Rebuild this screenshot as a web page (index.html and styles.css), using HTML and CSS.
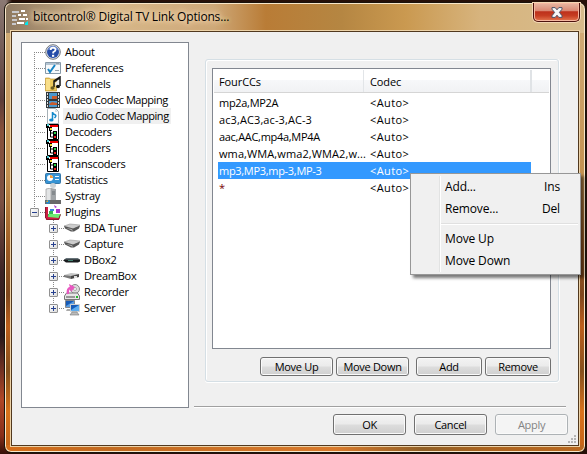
FILE: index.html
```html
<!DOCTYPE html>
<html lang="en">
<head>
<meta charset="utf-8">
<title>bitcontrol® Digital TV Link Options...</title>
<link rel="stylesheet" href="styles.css">
</head>
<body>
<svg class="defs" width="0" height="0" aria-hidden="true">
  <symbol id="codec" viewBox="0 0 16 16"><path fill="#fff" stroke="#000" d="M2.500.5h11v15h-11z"/><path fill="#f00000" d="M5 1h8v2H5z"/><path d="M5.500 5v8H9M5.500 9H9" fill="none" stroke="#000"/><path fill="#000" d="M1 0h3v4H1zM4 3h3v4H4zM8 7h4v4H8zM8 11h4v4H8z"/><path fill="#4ccbd2" d="M2 0h2v2H2z"/><path fill="#f1df32" d="M5 4h2v2H5z"/><path fill="#28d344" d="M9 8h2v2H9z"/><path fill="#f02020" d="M9 12h2v2H9z"/></symbol>
  <symbol id="tuner" viewBox="0 0 16 16"><path fill="#ccc" stroke="#999" stroke-width=".6" d="M0 6l6-2 10 1-1 2-6 2z"/><path fill="#555" d="M0 6l9 2.500 7-3-1 3-5 3-3 0-6-3z"/><path fill="#aaa" d="M2 8l6 1 1 2z"/></symbol>
</svg>
<main class="window">
  <header class="titlebar">
    <svg class="app-icon" width="16" height="16" viewBox="0 0 16 16"><path fill="#c8c8cc" d="M0 1h7v2H0zM0 5h4v2H0zM0 9h5v2H0zM0 13h4v2H0z"/><path fill="#fff" d="M9 0h4v2H9zM6 4h3v2H6zM11 4h4v2h-4zM7 8h6v2H7zM14 8h2v2h-2zM5 12h7v2H5z"/><path fill="#00e6ee" d="M13 15v-2l3-2v4z"/></svg>
    <h1>bitcontrol® Digital TV Link Options...</h1>
    <button class="close" aria-label="Close"><svg width="12" height="11" viewBox="0 0 12 11"><path fill="#f7f7f7" stroke="#4d5266" d="M1 .6h3.200L6 2.800 7.800.6H11v1.600L8.400 5.400 11 8.700v1.700H7.800L6 8.200l-1.800 2.200H1V8.700l2.600-3.300L1 2.200z"/></svg></button>
  </header>
  <div class="client">
    <nav class="tree">
      <ul>
        <li><svg class="icon" viewBox="0 0 16 16"><circle cx="8" cy="8" r="7.300" fill="#e0e3e7" stroke="#717780"/><circle cx="8" cy="8" r="6" fill="#234ba8"/><path fill="#718fd2" d="M3 6a5 4 0 0 1 10 0q-5-2-10 0"/><path d="M5.700 6q0-2.300 2.500-2.300T10.500 6Q10.500 7 8.200 8.200v1.300" fill="none" stroke="#fff" stroke-width="1.800"/><path fill="#fff" d="M7 10.800h2.200v2H7z"/></svg><span>About</span></li>
        <li><svg class="icon" viewBox="0 0 16 16"><path fill="#f6f9fb" stroke="#8799a8" d="M.5 2.500h15v11H.5z"/><path fill="#b4c5d3" d="M1 3h14v2H1z"/><path fill="none" stroke="#1684c4" stroke-width="2" d="M3 9l2 3 5-7"/><path stroke="#92a0ac" d="M10 10.500h4M11 3.500h3"/></svg><span>Preferences</span></li>
        <li><svg class="icon" viewBox="0 0 16 16"><path fill="#edc95c" stroke="#b98a20" stroke-width=".6" d="M.5 2h4l1 1h6v12H.5z"/><path fill="#f9df8a" d="M1 3h4v11H1z"/><path fill="none" stroke="#171717" stroke-width="1.500" d="M9 11V5l6-4v9M9 6l6-4"/><path fill="#eee" d="M10 7l4-3v3l-3 4z"/><ellipse cx="7.500" cy="12" rx="2" ry="1.800" fill="#6c5e23"/><ellipse cx="13" cy="10.500" rx="2" ry="1.800" fill="#111"/></svg><span>Channels</span></li>
        <li class="wide"><svg class="icon" viewBox="0 0 16 16"><path fill="#30383d" d="M1 0h14v16H1z"/><path fill="#4a98cf" d="M4 1h8v6H4zM4 9h8v6H4z"/><path fill="#c95b2c" d="M7 4h5v3H7zM4 12l3-2 5 1v2H5z"/><path d="M2.500 1v15m11-15v15" stroke="#ddd" stroke-dasharray="2 1"/></svg><span>Video Codec Mapping</span></li>
        <li class="wide selected"><svg class="icon" viewBox="0 0 16 16"><path fill="#fff" stroke="#a6b1b7" d="M2.500.5h8l3 3v12h-11z"/><path fill="#d3dfe5" d="M10 1l3 3h-3z"/><path fill="none" stroke="#168acb" stroke-width="1.500" d="M7.500 12V4q0 2 3 3 1 1-1 3"/><ellipse cx="6.300" cy="12" rx="2.200" ry="1.600" fill="#168acb"/></svg><span>Audio Codec Mapping</span></li>
        <li><svg class="icon"><use href="#codec"/></svg><span>Decoders</span></li>
        <li><svg class="icon"><use href="#codec"/></svg><span>Encoders</span></li>
        <li><svg class="icon"><use href="#codec"/></svg><span>Transcoders</span></li>
        <li><svg class="icon" viewBox="0 0 16 16"><rect x=".5" y="1.500" width="15" height="10" rx="1" fill="#3593d4" stroke="#3577a8"/><circle cx="5" cy="6" r="3" fill="#fff"/><path fill="#f29c37" d="M5 6V3a3 3 0 0 1 3 3z"/><path stroke="#e7f6ff" d="M10 4.500h4m-4 3h4"/><ellipse cx="8" cy="13.500" rx="3" ry="2.500" fill="#cbd3d8"/></svg><span>Statistics</span></li>
        <li><svg class="icon" viewBox="0 0 16 16"><path fill="#e2e4e5" stroke="#999" stroke-width=".7" d="M1 1l5-1v14H1z"/><path fill="#a1a5a8" d="M6 0l5 1v13H6z"/><path stroke="#686f73" d="M7 4h3M7 6h3"/><path fill="#686868" d="M0 12h16v4H0z"/><circle cx="3" cy="14" r="2" fill="#268acd"/><path fill="#e9a925" d="M3 12v2H1z"/></svg><span>Systray</span></li>
        <li class="root"><i class="toggle minus"></i><svg class="icon" viewBox="0 0 16 16"><path fill="#cc1e42" d="M0 3h3v10h12l-1 3H1z"/><path fill="#36b557" d="M4 7h4v3H4zM3 10h12v3H3z"/><path fill="#3887dd" d="M5 5h4v2H5z"/><path fill="#a832cb" d="M11 5h4v4h-4zM9 1l3 2-2 1z"/><path fill="#6dec73" d="M3 13l1-3h12l-2 4z"/><path fill="none" stroke="#8c1730" d="M.5 3v11l2 1.500h11l2-5"/></svg><span>Plugins</span></li>
      </ul>
      <ul class="children">
        <li><i class="toggle plus"></i><svg class="icon"><use href="#tuner"/></svg><span>BDA Tuner</span></li>
        <li><i class="toggle plus"></i><svg class="icon"><use href="#tuner"/></svg><span>Capture</span></li>
        <li><i class="toggle plus"></i><svg class="icon" viewBox="0 0 16 16"><path fill="#68747a" d="M2 6h12l2 2H0z"/><path fill="#171b1d" d="M0 7.500h16v2l-2 1H2L0 9z"/><path stroke="#438070" d="M4 8.500h5"/></svg><span>DBox2</span></li>
        <li><i class="toggle plus"></i><svg class="icon" viewBox="0 0 16 16"><path fill="#c4c5c5" d="M0 7l7-2 9 1-9 3z"/><path fill="#777" d="M0 7l7 1v3L0 9z"/><path fill="#454545" d="M7 8l8-2v3l-8 2z"/><path fill="#ddd" d="M10 8h3v2h-3z"/></svg><span>DreamBox</span></li>
        <li><i class="toggle plus"></i><svg class="icon" viewBox="0 0 16 16"><circle cx="11" cy="5" r="4.500" fill="#ddd" stroke="#888"/><circle cx="11" cy="5" r="1.500" fill="#fff" stroke="#aaa"/><path fill="#e7e7e7" stroke="#777" d="M2.500 9h11l2 3v3.500H.5V12z"/><path fill="#999" d="M2 12h9v2H2z"/><path fill="#22b92b" d="M12 12h2v2h-2z"/><path d="M4 10Q3 4 7 4" fill="none" stroke="#e858c0" stroke-width="2.500"/><path fill="#e858c0" d="M5 0l6 3-4 5z"/></svg><span>Recorder</span></li>
        <li><i class="toggle plus"></i><svg class="icon" viewBox="0 0 16 16"><path fill="#5b9ee1" stroke="#85878c" d="M1.500.5h9v7h-9z"/><path fill="#165bb8" d="M2 1h8L2 6z"/><path fill="#aaa" d="M3 9h5v2H2z"/><path fill="#5eadf0" stroke="#d0d0d0" d="M6.500 4.500h9v7h-9z"/><path fill="#165bb8" d="M7 5h8l-8 5z"/><path fill="#bbb" stroke="#777" stroke-width=".6" d="M8 12h5l2 3H6z"/></svg><span>Server</span></li>
      </ul>
    </nav>
    <div class="page">
      <section class="group">
        <div class="list">
          <div class="list-head"><span>FourCCs</span><span>Codec</span></div>
          <div class="row tight"><span>mp2a,MP2A</span><span>&lt;Auto&gt;</span></div>
          <div class="row"><span>ac3,AC3,ac-3,AC-3</span><span>&lt;Auto&gt;</span></div>
          <div class="row tight"><span>aac,AAC,mp4a,MP4A</span><span>&lt;Auto&gt;</span></div>
          <div class="row"><span>wma,WMA,wma2,WMA2,w...</span><span>&lt;Auto&gt;</span></div>
          <div class="row tight active"><span>mp3,MP3,mp-3,MP-3</span><span>&lt;Auto&gt;</span></div>
          <div class="row star"><span>*</span><span>&lt;Auto&gt;</span></div>
        </div>
        <div class="list-actions"><button class="btn">Move Up</button><button class="btn">Move Down</button><button class="btn small gap">Add</button><button class="btn small">Remove</button></div>
      </section>
      <hr>
      <footer><button class="btn">OK</button><button class="btn">Cancel</button><button class="btn" disabled>Apply</button></footer>
    </div>
    <svg class="grip" width="8" height="8" viewBox="0 0 8 8"><path fill="#b5b5b5" d="M6 0h2v2H6zM3 3h2v2H3zM6 3h2v2H6zM0 6h2v2H0zM3 6h2v2H3zM6 6h2v2H6z"/></svg>
  </div>
</main>
<div class="menu">
  <div class="item"><span>Add...</span><span>Ins</span></div>
  <div class="item"><span>Remove...</span><span>Del</span></div>
  <div class="separator"></div>
  <div class="item"><span>Move Up</span></div>
  <div class="item"><span>Move Down</span></div>
</div>
</body>
</html>
```
FILE: styles.css
```css
* { box-sizing: border-box; }
body {
  margin: 0; width: 587px; height: 454px; padding: 2px 1px 1px 4px; overflow: hidden;
  font: 11px/16px "Open Sans", "Noto Sans", sans-serif; color: #000;
  background: linear-gradient(90deg, transparent 6px, #261008 12px), linear-gradient(#8b7974, #5c3d39 22%, #87503a 29%, #7d5143 44%, #3e2425 60%, #28191c 74%, #b04627 88%, #872e19 96%, #351008);
}
.defs { position: absolute; }
button { font: inherit; color: inherit; padding: 0; }
.window {
  width: 582px; height: 451px; padding: 0 6px 6px; border: 1px solid #19130d; border-radius: 7px;
  box-shadow: inset 0 0 0 1px #f8e7c9;
  background:
    linear-gradient(90deg, #8d7860 0, #d7b88c 18%, #cea878 36%, #b97c36 45%, #b58642 58%, #ca9950 69%, #d7b47e 82%, #d7bc8c) 0 0 / 100% 30px no-repeat,
    linear-gradient(90deg, #d56e1b, #c26a20 18%, #d97a2c 57%, #916027 72%, #ad641f 84%, #b96920) 0 100% / 100% 7px no-repeat,
    linear-gradient(#cfaa74 7%, #c49251 38%, #9c5a22 55%, #7e471d 65%, #bd5f1c 72%, #85511d 82%, #d9731c 91%, #c26419);
}
.titlebar { height: 28px; display: flex; align-items: flex-start; padding-left: 1px; }
.app-icon { margin-top: 7px; flex: none; }
h1 {
  margin: 4px 0 0 4px; padding: 0 1px; height: 20px; flex: none; white-space: nowrap;
  font: 400 12px/20px "Open Sans", "Noto Sans", sans-serif; letter-spacing: -.17px;
  text-shadow: 0 0 5px #ffe9cc, 0 0 8px #f2d2a8, 0 0 10px #f0cca0;
}
.close {
  margin: 0 -1px 0 auto; width: 47px; height: 19px; border: 1px solid #4c120d; border-top: 0; border-radius: 0 0 5px 5px;
  display: flex; align-items: center; justify-content: center;
  background: linear-gradient(#e8b8a4, #d98671 45%, #bd301b 48%, #c63d22 70%, #e47750);
  box-shadow: inset 0 0 0 1px #f5b7a0, 0 0 0 1px #f2d6b4;
}
.client {
  position: relative; width: 568px; height: 415px; border: 1px solid #51391f; outline: 1px solid #ecd2a8; background: #f0f0f0;
  display: flex; padding: 10px 10px 0 9px;
}
.tree { width: 168px; height: 366px; border: 1px solid #828790; background: #fff; padding: 1px 0; }
ul { list-style: none; margin: 0; padding: 0 0 0 12px; }
li { height: 16px; display: flex; align-items: center; position: relative; padding-left: 11px; }
li::before { content: ""; position: absolute; left: 0; top: 8px; width: 11px; height: 1px; background: repeating-linear-gradient(90deg, #888 0 1px, transparent 1px 2px); }
li::after { content: ""; position: absolute; left: 0; top: 0; width: 1px; height: 16px; background: repeating-linear-gradient(#888 0 1px, transparent 1px 2px); }
li:first-child::after { top: 8px; height: 8px; }
li:last-child::after { height: 8px; }
.children { padding-left: 31px; }
.children li:first-child::after { top: 0; height: 16px; }
.icon { width: 16px; height: 16px; flex: none; }
li span { margin-left: 2px; padding: 0 2px; line-height: 15px; height: 16px; white-space: nowrap; letter-spacing: -.25px; }
.wide span { letter-spacing: -.45px; }
.selected span { background: #f0f0f0; }
.toggle { position: absolute; z-index: 1; left: -4px; top: 4px; width: 9px; height: 9px; border: 1px solid #919191; border-radius: 1px; background: linear-gradient(#27418f, #27418f) 1px 3px / 5px 1px no-repeat, linear-gradient(135deg, #fff, #dcdcdc); }
.plus { background: linear-gradient(#27418f, #27418f) 1px 3px / 5px 1px no-repeat, linear-gradient(#27418f, #27418f) 3px 1px / 1px 5px no-repeat, linear-gradient(135deg, #fff, #dcdcdc); }
.page { width: 374px; margin-left: 5px; flex: none; padding-top: 17px; }
.group { width: 354px; height: 323px; margin-left: 11px; border: 1px solid #d5dfe5; border-radius: 3px; box-shadow: inset 1px 1px #fff, 0 1px #fff, 1px 0 #fff; padding: 8px 6px; }
.list { width: 339px; height: 281px; border: 1px solid #828790; background: #fff; padding: 1px; }
.list-head {
  height: 23px; display: flex; border-bottom: 1px solid #d5d5d5; padding-top: 4px; padding-left: 5px;
  background: linear-gradient(#e2e5e8, #e2e5e8) 149px 0 / 1px 22px no-repeat, linear-gradient(#e0e3e6, #e0e3e6) 316px 0 / 2px 22px no-repeat, linear-gradient(#fff 45%, #f7f8fa 46%, #f1f2f4);
}
.list-head span { width: 151px; white-space: nowrap; letter-spacing: -.1px; }
.row span { width: 151px; white-space: nowrap; letter-spacing: .1px; }
.row span:last-child { letter-spacing: .4px; }
.row.tight span:first-child { letter-spacing: -.3px; }
.row { height: 17px; line-height: 18px; margin-left: 4px; width: 313px; padding-left: 1px; display: flex; }
.list-head + .row { margin-top: 1px; }
.active { background: #3399ff; color: #fff; }
.star span:first-child { color: #700; }
.list-actions { display: flex; gap: 3px; margin-top: 8px; padding-left: 48px; }
.btn { width: 73px; height: 19px; flex: none; border: 1px solid #707070; border-radius: 3px; background: linear-gradient(#f3f3f3, #ebebeb 48%, #dddddd 52%, #cfcfcf); box-shadow: inset 0 0 0 1px #fafafa; line-height: 17px; letter-spacing: -.3px; }
.small { width: 66px; }
.gap { margin-left: 4px; }
hr { margin: 24px 0 0; width: 372px; height: 2px; border: 0; background: linear-gradient(#a0a0a0 50%, #fff 50%); }
footer { display: flex; gap: 8px; margin-top: 6px; padding-left: 139px; }
footer .btn { height: 21px; line-height: 19px; }
.btn:disabled { color: #838383; border-color: #adb2b5; background: #f4f4f4; }
.grip { position: absolute; right: 2px; bottom: 2px; }
.menu {
  position: absolute; left: 410px; top: 173px; width: 171px; height: 102px; border: 1px solid #979797; padding: 2px;
  background: linear-gradient(90deg, #e2e3e3 50%, #fff 50%) 28px 2px / 2px 96px no-repeat, #f0f0f0;
  box-shadow: 3px 3px 3px #0008; font: 12px/22px "Open Sans", "Noto Sans", sans-serif; letter-spacing: -.15px;
}
.item { height: 22px; display: flex; justify-content: space-between; padding: 0 18px 0 32px; }
.separator { height: 2px; margin: 3px 0 3px 28px; background: linear-gradient(#e0e0e0 50%, #fff 50%); }
```
